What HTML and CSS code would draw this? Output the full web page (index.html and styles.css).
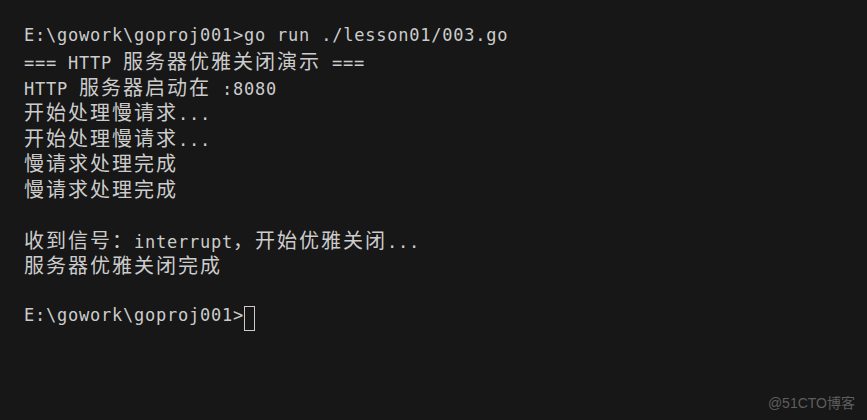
FILE: index.html
```html
<!DOCTYPE html>
<html lang="zh-CN">
<head>
<meta charset="utf-8">
<title>Terminal</title>
<link rel="stylesheet" href="styles.css">
</head>
<body>
<div class="term">
  <div class="line">E:\gowork\goproj001&gt;go run ./lesson01/003.go</div>
  <div class="line">=== HTTP <span class="cjk">服务器优雅关闭演示</span> ===</div>
  <div class="line">HTTP <span class="cjk">服务器启动在</span> :8080</div>
  <div class="line"><span class="cjk">开始处理慢请求</span>...</div>
  <div class="line"><span class="cjk">开始处理慢请求</span>...</div>
  <div class="line"><span class="cjk">慢请求处理完成</span></div>
  <div class="line"><span class="cjk">慢请求处理完成</span></div>
  <div class="line"></div>
  <div class="line"><span class="cjk">收到信号：</span>interrupt<span class="cjk">，开始优雅关闭</span>...</div>
  <div class="line"><span class="cjk">服务器优雅关闭完成</span></div>
  <div class="line"></div>
  <div class="line">E:\gowork\goproj001&gt;<span class="cursor"></span></div>
</div>
<div class="mark">@51CTO博客</div>
</body>
</html>
```
FILE: styles.css
```css
html, body {
  margin: 0;
  padding: 0;
  background: #171717;
  height: 100%;
}
body {
  position: relative;
  overflow: hidden;
}
.term {
  padding: 23px 0 0 24px;
  font-family: "DejaVu Sans Mono", "Liberation Mono", monospace;
  font-size: 17px;
  letter-spacing: 0.77px;
  color: #cccccc;
}
.line {
  height: 25.45px;
  line-height: 25.45px;
  white-space: pre;
}
.cjk {
  font-family: "Noto Sans CJK SC", sans-serif;
  font-size: 20px;
  letter-spacing: 2px;
  line-height: 25.45px;
}
.cursor {
  display: inline-block;
  box-sizing: border-box;
  width: 11px;
  height: 25px;
  border: 1px solid #cccccc;
  vertical-align: -10px;
}
.mark {
  position: absolute;
  right: 12px;
  bottom: 8px;
  font-family: "Liberation Sans", Arial, "Noto Sans CJK SC", sans-serif;
  font-size: 14px;
  color: #5e5e5e;
}
```
